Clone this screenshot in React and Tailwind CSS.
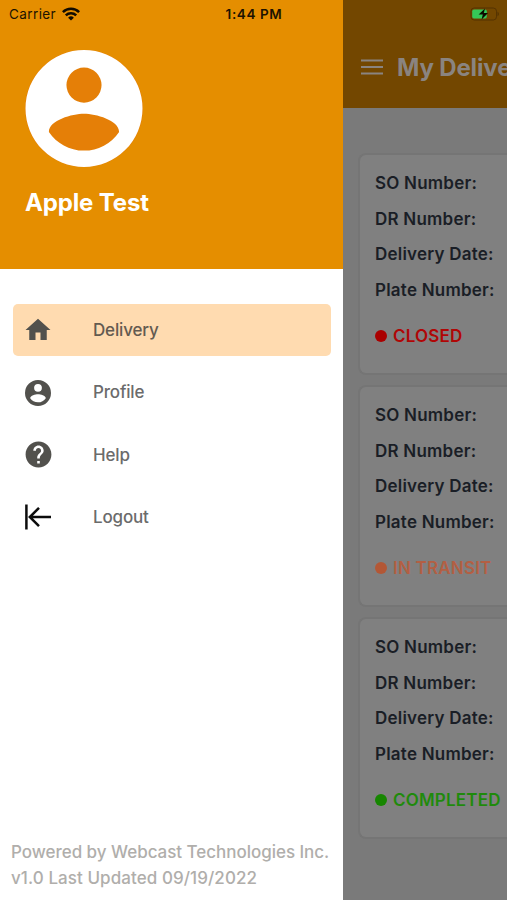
import { MdHelp, MdHome } from 'react-icons/md';

const AccountIcon = ({ className }) => (
  <svg viewBox="2 2 20 20" className={className} fill="currentColor">
    <path d="M12 19.2c-2.5 0-4.71-1.28-6-3.2.03-2 4-3.1 6-3.1s5.97 1.1 6 3.1a7.232 7.232 0 0 1-6 3.2M12 5a3 3 0 1 1 0 6 3 3 0 0 1 0-6m0-3a10 10 0 1 0 0 20 10 10 0 0 0 0-20" />
  </svg>
);

const LogoutIcon = () => (
  <svg viewBox="0 0 26 26" className="h-[26px] w-[26px]" fill="none" stroke="#0c0c0c">
    <path d="M1.4 0.5v25" strokeWidth="2.5" />
    <path d="M26 13H5M14 3.8L4.8 13l9.2 9.2" strokeWidth="2.5" />
  </svg>
);

const MenuIcon = () => (
  <svg viewBox="0 0 22 16" className="h-4 w-[22px] shrink-0" fill="none" stroke="currentColor" strokeWidth="1.8">
    <path d="M0 1.5h22M0 8h22M0 14.5h22" />
  </svg>
);

const menuItems = [
  { label: 'Delivery', icon: <MdHome size={30} />, active: true },
  { label: 'Profile', icon: <AccountIcon className="h-[26px] w-[26px]" /> },
  { label: 'Help', icon: <MdHelp size={31} /> },
  { label: 'Logout', icon: <LogoutIcon /> },
];

const deliveries = [
  { status: 'CLOSED', text: 'text-[#b00606]', dot: 'bg-[#aa0000]' },
  { status: 'IN TRANSIT', text: 'text-[#b35f43]', dot: 'bg-[#b35735]' },
  { status: 'COMPLETED', text: 'text-[#1f8a0c]', dot: 'bg-[#168600]' },
];

const fields = ['SO Number:', 'DR Number:', 'Delivery Date:', 'Plate Number:'];

const StatusBar = () => (
  <div className="absolute inset-x-0 top-0 flex h-7 items-center justify-between pr-2 pl-[9px] text-[#1c1300]">
    <div className="flex w-24 items-center gap-[6px]">
      <span className="text-[13.5px] tracking-[0.4px]">Carrier</span>
      <svg viewBox="0 0 18 14" className="h-[14px] w-[18px]" fill="none" stroke="#120c00" strokeWidth="2.5">
        <path d="M0.9 5.1a11.5 11.5 0 0 1 16.2 0" />
        <path d="M3.8 8.3a7.4 7.4 0 0 1 10.4 0" />
        <path d="M9 13.6L6.1 10.7a4.1 4.1 0 0 1 5.8 0z" fill="#120c00" stroke="none" />
      </svg>
    </div>
    <span className="text-[13.5px] font-semibold tracking-[0.6px]">1:44 PM</span>
    <div className="flex w-24 justify-end">
      <svg viewBox="0 0 30 14" className="h-[14px] w-[30px]">
        <rect x="2" y="1" width="25.5" height="12" rx="3.2" fill="none" stroke="#553300" strokeWidth="1" />
        <path d="M28.5 4.8v4.4c1-.4 1.4-1.2 1.4-2.2s-.4-1.8-1.4-2.2z" fill="#553300" />
        <rect x="3.2" y="2.4" width="14.6" height="9.2" rx="1.8" fill="#35c758" />
        <path d="M16 1.6L9.6 7.6h4.2l-1.2 4.8 6.4-6.4h-4.2z" fill="#0a0a00" />
      </svg>
    </div>
  </div>
);

const Drawer = () => (
  <aside className="flex w-[343px] shrink-0 flex-col bg-white">
    <div className="flex h-[269px] flex-col bg-[#e58e00] pt-[50px] pl-[25px]">
      <div className="h-[117px] w-[118px] rounded-full bg-[#e57f07]">
        <AccountIcon className="h-[117px] w-[118px] text-white" />
      </div>
      <h2 className="mt-5 text-[24px] leading-8 font-bold tracking-[-0.15px] text-white">Apple Test</h2>
    </div>

    <nav className="mt-[35px] flex flex-col gap-[10px] pr-[12px] pl-[13px]">
      {menuItems.map(({ label, icon, active }) => (
        <a
          key={label}
          className={`flex h-[52.4px] items-center rounded-[5px] ${active ? 'bg-[#ffdbb0]' : ''}`}
        >
          <span className="ml-[9px] flex w-[32px] justify-center text-[#52514d]">{icon}</span>
          <span
            className={`ml-[39px] pt-px text-[17px] font-medium tracking-[-0.17px] ${active ? 'text-[#635a50]' : 'text-[#6b6b6b]'}`}
          >
            {label}
          </span>
        </a>
      ))}
    </nav>

    <footer className="mt-auto pb-[9px] pl-[11px] text-[17px] leading-[26px] font-medium whitespace-nowrap text-[#b0aeab]">
      <p className="tracking-[-0.03px]">Powered by Webcast Technologies Inc.</p>
      <p className="tracking-[0.07px]">v1.0 Last Updated 09/19/2022</p>
    </footer>
  </aside>
);

const DeliveryCard = ({ status, text, dot }) => (
  <article className="h-[222px] rounded-l-lg border-2 border-r-0 border-[#757575] bg-[#808080] pt-[11px] pl-[15px]">
    {fields.map((field) => (
      <p key={field} className="h-[35.6px] text-[17px] leading-[35.6px] font-semibold tracking-[0.22px] text-[#1a1e26]">
        {field}
      </p>
    ))}
    <div className={`mt-[10px] flex h-[36px] items-center gap-[6px] text-[17px] font-semibold tracking-[0.2px] ${text}`}>
      <span className={`mb-px h-3 w-3 rounded-full ${dot}`} />
      {status}
    </div>
  </article>
);

const App = () => (
  <div className="relative flex h-[900px] w-[507px] overflow-hidden font-['Inter',sans-serif]">
    <Drawer />
    <main className="w-[164px] overflow-hidden bg-[#7a7a7a]">
      <header className="flex h-[108px] items-center gap-[14px] bg-[#734700] pt-[26px] pl-[18px] text-[#8a8480]">
        <MenuIcon />
        <h1 className="pt-px text-[24px] font-bold tracking-[-0.15px] whitespace-nowrap">My Delive</h1>
      </header>
      <div className="flex flex-col gap-[10px] pt-[45px] pl-[15px]">
        {deliveries.map((delivery) => (
          <DeliveryCard key={delivery.status} {...delivery} />
        ))}
      </div>
    </main>
    <StatusBar />
  </div>
);

export default App;
